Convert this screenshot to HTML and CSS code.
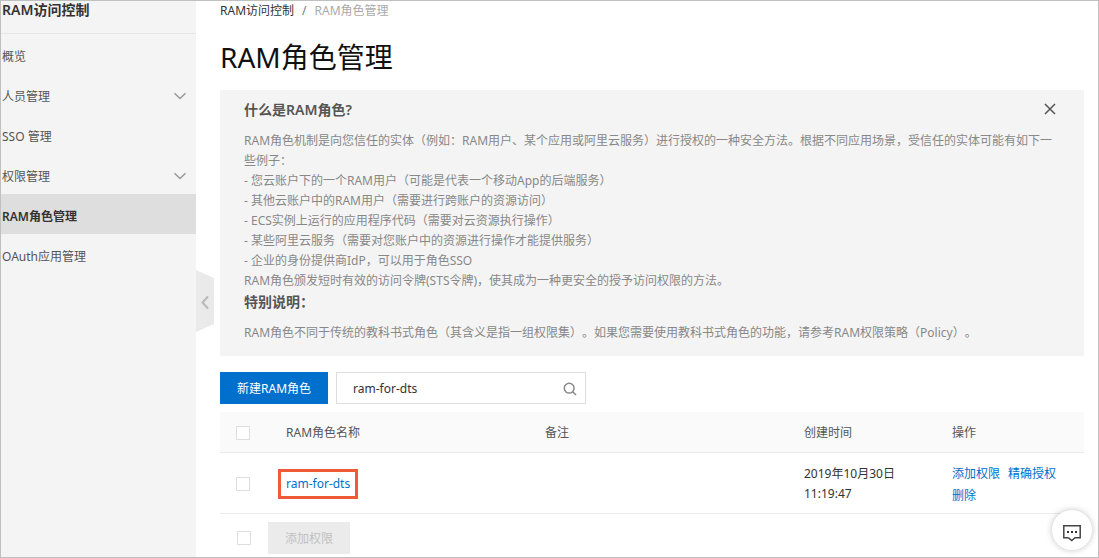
FILE: index.html
```html
<!DOCTYPE html>
<html lang="zh-CN">
<head>
<meta charset="utf-8">
<meta name="viewport" content="width=device-width, initial-scale=1">
<title>RAM访问控制</title>
<link rel="stylesheet" href="styles.css">
</head>
<body>
<div class="frame">
  <aside class="sidebar">
    <div class="sidebar-title">RAM访问控制</div>
    <nav class="menu">
      <a class="menu-item" href="#overview">概览</a>
      <a class="menu-item" href="#people">人员管理
        <svg class="chevron" viewBox="0 0 14 8" aria-hidden="true"><path d="M1.500 1.200 7 6.500 12.500 1.200"/></svg></a>
      <a class="menu-item" href="#sso">SSO 管理</a>
      <a class="menu-item" href="#permissions">权限管理
        <svg class="chevron" viewBox="0 0 14 8" aria-hidden="true"><path d="M1.500 1.200 7 6.500 12.500 1.200"/></svg></a>
      <a class="menu-item active" href="#roles" aria-current="page">RAM角色管理</a>
      <a class="menu-item" href="#oauth">OAuth应用管理</a>
    </nav>
    <button class="collapse" type="button" aria-label="收起菜单">
      <svg viewBox="0 0 18 62" aria-hidden="true"><path class="tab" d="M0 0 18 8V54L0 62Z"/><path class="arrow" d="M12 26.500 6.500 32.500 12 38.500"/></svg>
    </button>
  </aside>

  <main class="content">
    <nav class="breadcrumb" aria-label="面包屑">
      <a href="#home">RAM访问控制</a><span class="slash">/</span><span class="current">RAM角色管理</span>
    </nav>
    <h1>RAM角色管理</h1>

    <section class="info">
      <button class="close" type="button" aria-label="关闭">
        <svg viewBox="0 0 12 12" aria-hidden="true"><path d="M1 1 11 11M11 1 1 11"/></svg>
      </button>
      <h2>什么是RAM角色?</h2>
      <p class="intro">RAM角色机制是向您信任的实体（例如：RAM用户、某个应用或阿里云服务）进行授权的一种安全方法。根据不同应用场景，受信任的实体可能有如下一些例子：<br>
      - 您云账户下的一个RAM用户（可能是代表一个移动App的后端服务）<br>
      - 其他云账户中的RAM用户（需要进行跨账户的资源访问）<br>
      - ECS实例上运行的应用程序代码（需要对云资源执行操作）<br>
      - 某些阿里云服务（需要对您账户中的资源进行操作才能提供服务）<br>
      - 企业的身份提供商IdP，可以用于角色SSO<br>
      RAM角色颁发短时有效的访问令牌(STS令牌)，使其成为一种更安全的授予访问权限的方法。</p>
      <h2>特别说明：</h2>
      <p>RAM角色不同于传统的教科书式角色（其含义是指一组权限集）。如果您需要使用教科书式角色的功能，请参考RAM权限策略（Policy）。</p>
    </section>

    <div class="toolbar">
      <button class="btn primary" type="button">新建RAM角色</button>
      <form class="search" role="search">
        <input type="text" value="ram-for-dts" aria-label="搜索角色">
        <button type="button" aria-label="搜索">
          <svg viewBox="0 0 14 14" aria-hidden="true"><circle cx="6.200" cy="6.200" r="4.900"/><path d="M9.700 9.700 13 13"/></svg>
        </button>
      </form>
    </div>

    <table class="roles">
      <colgroup><col class="col-check"><col><col><col class="col-side"><col class="col-side"></colgroup>
      <thead>
        <tr>
          <th><input type="checkbox" aria-label="全选"></th>
          <th>RAM角色名称</th>
          <th>备注</th>
          <th>创建时间</th>
          <th>操作</th>
        </tr>
      </thead>
      <tbody>
        <tr>
          <td><input type="checkbox" aria-label="选择 ram-for-dts"></td>
          <td><a class="marked" href="#ram-for-dts">ram-for-dts</a></td>
          <td></td>
          <td>2019年10月30日 11:19:47</td>
          <td><div class="actions"><a href="#add">添加权限</a><a href="#precise">精确授权</a><a href="#delete">删除</a></div></td>
        </tr>
      </tbody>
    </table>

    <div class="batch">
      <input type="checkbox" aria-label="选择全部角色">
      <button class="btn" type="button" disabled>添加权限</button>
    </div>
  </main>
</div>
<button class="chat" type="button" aria-label="咨询">
  <svg viewBox="0 0 20 18" aria-hidden="true"><path class="bubble" d="M6.500 13.800H1.800V1.800H18.200V13.800H13L9.800 16.500 6.500 13.800"/><path class="dots" d="M5 7h2v2H5zM9 7h2v2H9zM13 7h2v2h-2z"/></svg>
</button>
</body>
</html>
```
FILE: styles.css
```css
* { box-sizing: border-box; }

body {
  margin: 0;
  font: 12px/20px "Noto Sans", "Noto Sans CJK SC", sans-serif;
  text-spacing-trim: space-all;
  color: #333;
  background: #fff;
}

button, input { font: inherit; margin: 0; }
button { border: 0; padding: 0; background: none; cursor: pointer; }
a { color: #0070cc; text-decoration: none; }
svg { display: block; fill: none; }
h1, h2, p { margin: 0; }

.frame {
  display: flex;
  min-height: 100vh;
  border: 1px solid #c0c0c0;
}

/* Sidebar */
.sidebar {
  position: relative;
  flex: 0 0 195px;
  background: #f4f4f4;
}
.sidebar-title {
  height: 33px;
  padding-left: 1px;
  font-size: 14px;
  line-height: 18px;
  font-weight: 600;
  border-bottom: 1px solid #e6e6e6;
}
.menu-item {
  display: flex;
  align-items: center;
  justify-content: space-between;
  height: 40px;
  padding: 6px 9px 0 1px;
  color: #555;
}
.menu-item.active {
  background: #dedede;
  color: #333;
  font-weight: 600;
}
.chevron {
  width: 14px;
  height: 8px;
  margin-bottom: 2px;
  stroke: #999;
  stroke-width: 1.5;
}
.collapse {
  position: absolute;
  top: 269px;
  left: 100%;
}
.collapse svg { width: 18px; height: 62px; }
.collapse .tab { fill: #eaeaea; }
.collapse .arrow { stroke: #b8b8b8; stroke-width: 2; }

/* Content */
.content {
  flex: 1;
  min-width: 0;
  padding: 0 14px 3px 24px;
}
.breadcrumb { display: flex; }
.breadcrumb a { color: #333; }
.breadcrumb .slash { padding: 0 8px; color: #777; }
.breadcrumb .current { color: #aaa; }
h1 {
  padding: 16px 0 13px;
  font-size: 28px;
  line-height: 40px;
  font-weight: 400;
  color: #111;
}

.info {
  position: relative;
  padding: 10px 24px 13px;
  background: #f4f4f4;
  color: #888;
}
.info h2 {
  font-size: 14px;
  line-height: 20px;
  font-weight: 600;
  color: #555;
}
.info p { padding-top: 11px; }
.info .intro { padding-bottom: 1px; }
.close {
  position: absolute;
  top: 13px;
  right: 28px;
}
.close svg { width: 12px; height: 12px; stroke: #555; stroke-width: 1.5; }

.toolbar {
  display: flex;
  gap: 8px;
  padding: 16px 0 8px;
}
.btn {
  height: 32px;
  padding: 2px 17px 0;
}
.btn.primary { background: #0070cc; color: #fff; }
.btn:disabled { background: #ebebeb; color: #c1c1c1; cursor: default; }
.search {
  display: flex;
  align-items: center;
  width: 250px;
  height: 32px;
  padding: 2px 8px 0 16px;
  border: 1px solid #dedede;
}
.search input {
  flex: 1;
  min-width: 0;
  padding: 0;
  border: 0;
  outline: 0;
  color: #333;
  background: none;
}
.search svg { width: 14px; height: 14px; stroke: #888; stroke-width: 1.5; }

input[type="checkbox"] {
  display: block;
  appearance: none;
  width: 14px;
  height: 14px;
  border: 1px solid #dedede;
  background: #fff;
}

.roles {
  width: 100%;
  table-layout: fixed;
  border-collapse: separate;
  border-spacing: 0;
}
.col-check { width: 50px; }
.col-side { width: 148px; }
.roles th, .roles td {
  padding: 2px 16px 0;
  text-align: left;
  border-bottom: 1px solid #ebebeb;
}
.roles th {
  height: 41px;
  background: #fafafa;
  color: #555;
  font-weight: 400;
}
.roles td { height: 61px; }
.roles td:last-child { padding-top: 4px; padding-right: 8px; }
.actions {
  display: flex;
  flex-wrap: wrap;
  column-gap: 8px;
  line-height: 22px;
}
.marked {
  display: inline-block;
  line-height: 14px;
  outline: 3px solid #f15a36;
  outline-offset: 5px;
}

.batch {
  display: flex;
  align-items: center;
  gap: 17px;
  padding: 8px 0 0 17px;
}

.chat {
  position: fixed;
  right: 7px;
  bottom: 8px;
  display: grid;
  place-items: center;
  width: 40px;
  height: 40px;
  padding-top: 6px;
  border-radius: 50%;
  background: #fff;
  box-shadow: 0 0 6px rgba(0, 0, 0, 0.25);
}
.chat svg { width: 20px; height: 18px; }
.chat .bubble { stroke: #444; stroke-width: 1.5; }
.chat .dots { fill: #333; }
```
